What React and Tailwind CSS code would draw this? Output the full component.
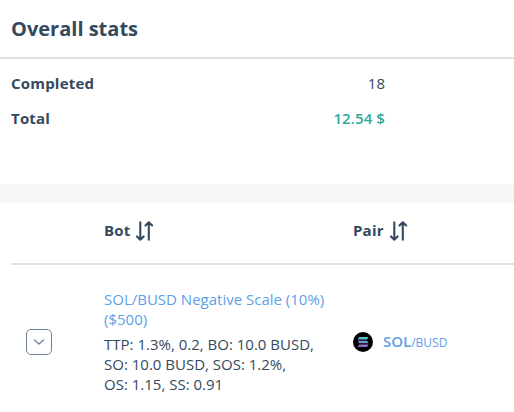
function SortIcon() {
  return (
    <svg className="h-5 w-5 shrink-0" viewBox="0 0 20 20" fill="none" stroke="#34495e" strokeWidth="2.1" strokeLinecap="round" strokeLinejoin="round">
      <path d="M5.3 1.2V18.5M2 15.4L5.3 18.7L8.6 15.4M13.8 18.8V1.5M10.5 4.6L13.8 1.3L17.1 4.6" />
    </svg>
  );
}

function SolanaIcon() {
  return (
    <svg className="h-5 w-5 shrink-0" viewBox="0 0 20 20">
      <defs>
        <linearGradient id="sol" gradientUnits="userSpaceOnUse" x1="11" y1="4.5" x2="9" y2="15.5">
          <stop offset="0" stopColor="#49d5bd" />
          <stop offset="0.5" stopColor="#7392d8" />
          <stop offset="1" stopColor="#a05fd8" />
        </linearGradient>
      </defs>
      <circle cx="10" cy="10" r="10" fill="#000" />
      <path fill="url(#sol)" d="M6.3 5.1H15.6L13.9 7.6H4.6ZM4.6 8.8H13.9L15.6 11.3H6.3ZM6.3 12.5H15.6L13.9 15H4.6Z" />
    </svg>
  );
}

export default function App() {
  return (
    <div className="flex h-[412px] w-[514px] flex-col overflow-hidden bg-white font-['Open_Sans',sans-serif] text-[15px] text-[#34495e]">
      <header className="flex h-[57px] shrink-0 items-center pl-[11px]">
        <h1 className="text-[20px] leading-7 font-bold">Overall stats</h1>
      </header>
      <section className="flex h-[127px] shrink-0 flex-col border-t-2 border-[#dbe3e6] pt-3 pr-[129px] pl-[11px] leading-6">
        <div className="flex h-[35px] items-start justify-between">
          <span className="font-bold tracking-[0.2px]">Completed</span>
          <span>18</span>
        </div>
        <div className="flex h-[35px] items-start justify-between">
          <span className="font-bold tracking-[0.2px]">Total</span>
          <span className="font-semibold tracking-[0.1px] text-[#2baa9b]">12.54 $</span>
        </div>
      </section>
      <div className="h-[19px] shrink-0 bg-[#f5f6f8]" />
      <section className="flex flex-1 flex-col pl-[11px]">
        <div className="flex h-[62px] shrink-0 items-center border-b-2 border-[#dbe3e6] pl-[93px] font-bold tracking-[0.2px]">
          <div className="flex w-[249px] items-center gap-[5px] pb-1">
            <span className="pb-[2px]">Bot</span>
            <SortIcon />
          </div>
          <div className="flex items-center gap-[5px] pb-1">
            <span className="pb-[2px]">Pair</span>
            <SortIcon />
          </div>
        </div>
        <div className="flex h-[154px] shrink-0 items-center">
          <div className="flex w-[93px] pl-[15px]">
            <button className="flex h-[26px] w-[26px] items-center justify-center rounded-[5px] border border-[#708196]">
              <svg className="h-3 w-3" viewBox="0 0 12 12" fill="none" stroke="#708196" strokeWidth="1.3" strokeLinecap="round" strokeLinejoin="round">
                <path d="M1.5 4L6 8L10.5 4" />
              </svg>
            </button>
          </div>
          <div className="w-[249px] pb-px leading-5 whitespace-nowrap">
            <div className="text-[#5d9fe9]">SOL/BUSD Negative Scale (10%)<br />($500)</div>
            <div className="mt-[5px]">TTP: 1.3%, 0.2, BO: 10.0 BUSD,<br />SO: 10.0 BUSD, SOS: 1.2%,<br />OS: 1.15, SS: 0.91</div>
          </div>
          <div className="flex items-center gap-[10px] text-[#5d9fe9]">
            <SolanaIcon />
            <div className="flex items-baseline pb-px">
              <span className="font-semibold">SOL</span>
              <span className="text-[12px]">/BUSD</span>
            </div>
          </div>
        </div>
      </section>
    </div>
  );
}
